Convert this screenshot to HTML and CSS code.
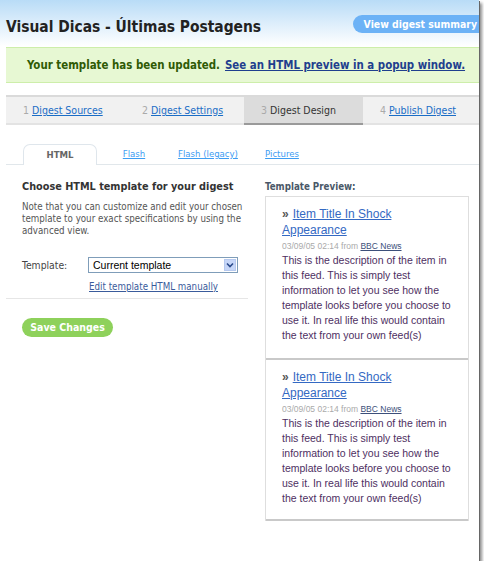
FILE: index.html
```html
<!DOCTYPE html>
<html lang="pt">
<head>
    <meta charset="UTF-8">
    <title>Visual Dicas - Últimas Postagens</title>
    <link rel="stylesheet" href="styles.css">
</head>
<body>
    <div class="frame">
        <div class="top">
            <h1>Visual Dicas - Últimas Postagens</h1>
            <a href="#" class="summary-btn">View digest summary</a>
        </div>

        <div class="notice">
            <span class="notice-text">Your template has been updated.</span>
            <a href="#" class="notice-link">See an HTML preview in a popup window.</a>
        </div>

        <!-- passos do assistente -->
        <ul class="steps">
            <li><span class="num">1</span> <a href="#">Digest Sources</a></li>
            <li><span class="num">2</span> <a href="#">Digest Settings</a></li>
            <li class="active"><span class="num">3</span> Digest Design</li>
            <li><span class="num">4</span> <a href="#">Publish Digest</a></li>
        </ul>

        <div class="subtabs">
            <span class="subtab current">HTML</span>
            <a href="#" class="subtab">Flash</a>
            <a href="#" class="subtab">Flash (legacy)</a>
            <a href="#" class="subtab">Pictures</a>
        </div>

        <div class="content">
            <div class="left-col">
                <h2>Choose HTML template for your digest</h2>
                <p class="note">Note that you can customize and edit your chosen template to your exact specifications by using the advanced view.</p>

                <div class="template-row">
                    <span class="field-label">Template:</span>
                    <div class="fake-select">
                        <span>Current template</span>
                        <span class="select-arrow">
                            <svg width="8" height="6" viewBox="0 0 8 6"><path d="M1 1.5 L4 4.5 L7 1.5" fill="none" stroke="#2a4a8a" stroke-width="1.6"/></svg>
                        </span>
                    </div>
                </div>
                <a href="#" class="edit-link">Edit template HTML manually</a>

                <div class="divider"></div>

                <a href="#" class="save-btn">Save Changes</a>
            </div>

            <div class="right-col">
                <div class="preview-label">Template Preview:</div>
                <div class="preview-box">
                    <div class="item">
                        <div class="item-title"><a href="#">Item Title In Shock Appearance</a></div>
                        <div class="item-meta">03/09/05 02:14 from <a href="#">BBC News</a></div>
                        <div class="item-desc">This is the description of the item in this feed. This is simply test information to let you see how the template looks before you choose to use it. In real life this would contain the text from your own feed(s)</div>
                    </div>
                    <div class="item">
                        <div class="item-title"><a href="#">Item Title In Shock Appearance</a></div>
                        <div class="item-meta">03/09/05 02:14 from <a href="#">BBC News</a></div>
                        <div class="item-desc">This is the description of the item in this feed. This is simply test information to let you see how the template looks before you choose to use it. In real life this would contain the text from your own feed(s)</div>
                    </div>
                </div>
            </div>
        </div>
    </div>
</body>
</html>
```

FILE: styles.css
```css
body {
    margin: 0;
    background: #fff;
    font-family: "DejaVu Sans Condensed", "DejaVu Sans", sans-serif;
}

.frame {
    width: 479px;
    height: 561px;
    background: #fff;
    overflow: hidden;
    box-shadow: 1px 1px 0 #666, 3px 3px 3px rgba(0, 0, 0, 0.45);
}

/* topo */
.top {
    height: 47px;
    box-sizing: border-box;
    padding: 15px 0 0 6px;
    display: flex;
    align-items: flex-start;
    background: linear-gradient(#b9dcf7, #ffffff 46px);
}

.top h1 {
    margin: 2px 0 0 0;
    font-size: 15.4px;
    line-height: 20px;
    color: #222;
    font-weight: bold;
}

.summary-btn {
    margin-left: auto;
    margin-right: -10px;
    flex-shrink: 0;
    height: 18px;
    line-height: 18px;
    padding: 0 12px 0 11px;
    border-radius: 9px;
    background: #6cb2f6;
    color: #fff;
    font-size: 10.4px;
    font-weight: bold;
    text-decoration: none;
}

.notice {
    margin-left: 6px;
    height: 36px;
    box-sizing: border-box;
    border-top: 1px solid #cdeeaa;
    border-bottom: 1px solid #cdeeaa;
    background: #e7f8d3;
    display: flex;
    align-items: center;
    padding-left: 21px;
    font-size: 11.4px;
    font-weight: bold;
}

.notice-text {
    color: #2f5a05;
    margin-right: 5px;
}

.notice-link {
    color: #1f3f8e;
}

/* passos */
.steps {
    list-style: none;
    margin: 12px 0 0 6px;
    padding: 0;
    display: grid;
    grid-template-columns: 119px 119px 119px 1fr;
    border-top: 2px solid #dadada;
    background: #f1f1f1;
}

.steps li {
    height: 26px;
    line-height: 26px;
    padding-left: 17px;
    border-bottom: 2px solid #e3e3e3;
    font-size: 10.5px;
    color: #333;
}

.steps li.active {
    background: #dcdcdc;
    border-bottom-color: #9a9a9a;
}

.steps .num {
    color: #aaa;
}

.steps a {
    color: #1a6dc6;
}

.subtabs {
    margin: 19px 0 0 6px;
    padding-left: 17px;
    height: 20px;
    display: flex;
    align-items: flex-end;
    border-bottom: 1px solid #e1e7eb;
}

.subtab {
    width: 74px;
    height: 20px;
    line-height: 20px;
    text-align: center;
    font-size: 9.5px;
    color: #3d9df3;
}

.subtab.current {
    box-sizing: border-box;
    height: 21px;
    margin-bottom: -1px;
    border: 1px solid #dfe6ec;
    border-bottom: none;
    border-radius: 7px 7px 0 0;
    background: #fff;
    color: #666;
    font-weight: bold;
    text-decoration: none;
}

/* conteúdo */
.content {
    display: flex;
    padding: 15px 0 0 6px;
}

.left-col {
    width: 242px;
}

.left-col h2 {
    margin: 0 0 7px 16px;
    font-size: 10.8px;
    line-height: 14px;
    color: #333;
}

.note {
    margin: 0 0 0 16px;
    font-size: 9.7px;
    line-height: 12px;
    color: #555;
}

.template-row {
    display: flex;
    align-items: center;
    margin: 20px 0 0 16px;
}

.field-label {
    width: 66px;
    font-size: 10.3px;
    color: #444;
}

.fake-select {
    width: 150px;
    height: 16px;
    box-sizing: border-box;
    border: 1px solid #7f9db9;
    display: flex;
    align-items: center;
    justify-content: space-between;
    padding-left: 4px;
    font-family: "Liberation Sans", Arial, sans-serif;
    font-size: 10.5px;
    color: #000;
}

.select-arrow {
    width: 12px;
    height: 12px;
    margin-right: 1px;
    box-sizing: border-box;
    border: 1px solid #b6c9ef;
    background: #c6d6f8;
    display: flex;
    align-items: center;
    justify-content: center;
}

.edit-link {
    display: block;
    margin: 8px 0 0 83px;
    font-size: 9.7px;
    line-height: 12px;
    color: #3a5b9b;
}

.divider {
    margin-top: 5px;
    border-top: 1px solid #e6e6e6;
}

.save-btn {
    display: inline-block;
    margin: 19px 0 0 16px;
    width: 91px;
    height: 19px;
    line-height: 19px;
    border-radius: 10px;
    background: #8ed15b;
    color: #fff;
    text-align: center;
    font-size: 10.5px;
    font-weight: bold;
    text-decoration: none;
}

.right-col {
    margin-left: 17px;
    width: 204px;
}

.preview-label {
    font-size: 9.7px;
    line-height: 14px;
    font-weight: bold;
    color: #4a5868;
    margin-bottom: 2px;
}

.preview-box {
    border: 1px solid #dedede;
    border-bottom: none;
    font-family: "Liberation Sans", Arial, sans-serif;
}

.item {
    padding: 9px 12px 15px 16px;
    border-bottom: 2px solid #c9c9c9;
}

.item + .item {
    padding-bottom: 13px;
}

.item-title {
    font-size: 12px;
    line-height: 16px;
}

.item-title a {
    color: #3469c3;
}

/* o » fica fora do sublinhado */
.item-title a::before {
    content: "»";
    display: inline-block;
    margin-right: 4px;
    color: #555;
    font-weight: bold;
}

.item-meta {
    padding-top: 2px;
    font-size: 8.5px;
    line-height: 13px;
    color: #aaa;
}

.item-meta a {
    color: #3c4f7a;
}

.item-desc {
    font-size: 10.5px;
    line-height: 15px;
    color: #4e2f62;
}
```
